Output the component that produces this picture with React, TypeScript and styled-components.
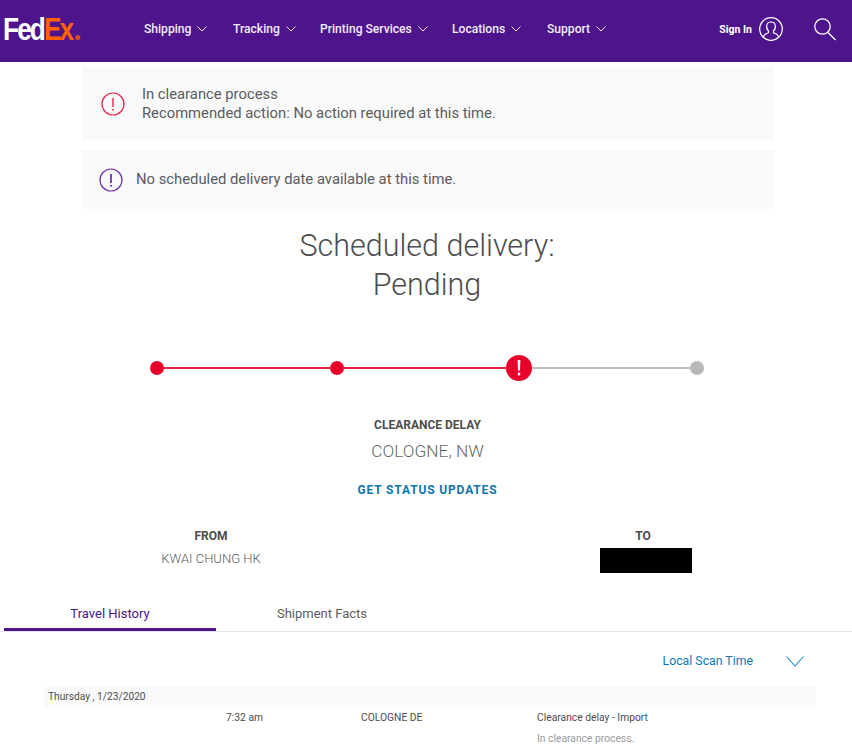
import React from "react";
import styled, { createGlobalStyle } from "styled-components";

const Global = createGlobalStyle`
  html, body { margin: 0; padding: 0; background: #fff; }
  body { font-family: Roboto, "Noto Sans", sans-serif; color: #4d4d4d; overflow: hidden; }
  * { box-sizing: border-box; }
`;

const Page = styled.div`
  width: 852px;
  height: 750px;
  overflow: hidden;
`;

const Header = styled.header`
  height: 62px;
  background: #4d148c;
  display: flex;
  align-items: center;
  color: #fff;
  padding: 0 16px 4px 4px;
`;

const LogoBox = styled.div`
  width: 140px;
  height: 30px;
  display: flex;
  align-items: center;
`;

const Logo = styled.div`
  display: flex;
  align-items: baseline;
  font-family: "Liberation Sans", Arial, sans-serif;
  font-size: 30.5px;
  font-weight: 700;
  letter-spacing: -2.2px;
  line-height: 1;
  transform: scaleX(0.86);
  transform-origin: left center;
  margin-left: -1px;
`;

const LogoEx = styled.span`
  color: #ff6200;
`;

const LogoDot = styled.span`
  width: 6px;
  height: 5px;
  margin-left: 3px;
  border-radius: 50%;
  background: #ff6200;
  opacity: 0.75;
`;

const Nav = styled.nav`
  flex: 1;
  display: flex;
  align-items: center;
`;

const NavItem = styled.a<{ $w: number }>`
  width: ${(p) => p.$w}px;
  display: flex;
  align-items: center;
  gap: 6px;
  font-size: 12.1px;
  font-weight: 500;
  color: #f3edf9;
`;

const SignIn = styled.div`
  display: flex;
  align-items: center;
  gap: 7px;
  font-size: 10.5px;
  font-weight: 700;
  white-space: nowrap;
  margin-right: 31px;
`;

const Main = styled.main`
  width: 692px;
  margin: 5px 0 0 82px;
`;

const Alert = styled.div<{ $h: number; $pad: number; $gap: number }>`
  height: ${(p) => p.$h}px;
  background: #f9f9f9;
  display: flex;
  align-items: center;
  gap: ${(p) => p.$gap}px;
  padding-left: ${(p) => p.$pad}px;
  margin-bottom: 10px;
  font-size: 14.8px;
  line-height: 19px;
  color: #5c5c5c;
`;

const AlertText = styled.div``;

const Title = styled.h1`
  margin: 17px 2px 0 0;
  text-align: center;
  font-size: 30.5px;
  line-height: 39px;
  font-weight: 300;
  color: #4d4d4d;
`;

const Progress = styled.div`
  width: 554px;
  height: 26px;
  margin: 51px 0 0 68px;
  display: flex;
  align-items: center;
`;

const Dot = styled.span<{ $grey?: boolean }>`
  width: 14px;
  height: 14px;
  flex: none;
  border-radius: 50%;
  background: ${(p) => (p.$grey ? "#b8b8b8" : "#e8002d")};
`;

const Line = styled.span<{ $w: number; $grey?: boolean }>`
  width: ${(p) => p.$w}px;
  height: 2px;
  flex: none;
  background: ${(p) => (p.$grey ? "#bdbdbd" : "#e8244a")};
`;

const BigDot = styled.span`
  width: 26px;
  height: 26px;
  flex: none;
  display: flex;
  align-items: center;
  justify-content: center;
  border-radius: 50%;
  background: #e8002d;
`;

const StatusBlock = styled.div`
  text-align: center;
  margin: 0 1px 0 0;
`;

const StatusLabel = styled.div`
  margin-top: 36px;
  font-size: 12px;
  line-height: 16px;
  font-weight: 700;
  color: #4d4d4d;
`;

const StatusPlace = styled.div`
  margin-top: 8px;
  font-size: 17.3px;
  line-height: 20px;
  font-weight: 300;
  color: #666;
`;

const StatusLink = styled.a`
  display: block;
  margin-top: 21px;
  font-size: 12px;
  line-height: 16px;
  font-weight: 700;
  letter-spacing: 0.85px;
  color: #0f75ae;
`;

const Route = styled.div`
  height: 62px;
  margin-top: 30px;
  padding-left: 80px;
  display: flex;
`;

const RouteCol = styled.div<{ $w: number }>`
  width: ${(p) => p.$w}px;
  display: flex;
  flex-direction: column;
  align-items: center;
`;

const RouteLabel = styled.div<{ $shift?: number }>`
  font-size: 12px;
  line-height: 16px;
  font-weight: 700;
  color: #4d4d4d;
  margin-right: ${(p) => p.$shift ?? 0}px;
`;

const RouteValue = styled.div`
  margin-top: 7px;
  font-size: 13px;
  line-height: 16px;
  font-weight: 300;
  color: #5c5c5c;
`;

const Redacted = styled.div`
  width: 92px;
  height: 25px;
  margin-top: 4px;
  background: #000;
`;

const RouteSpacer = styled.div`
  width: 258px;
`;

const Tabs = styled.div`
  margin-top: 9px;
  height: 33px;
  padding-left: 4px;
  display: flex;
  border-bottom: 1px solid #e3e3e3;
`;

const Tab = styled.div<{ $active?: boolean }>`
  width: 212px;
  height: 32px;
  padding-top: 5px;
  text-align: center;
  font-size: 13px;
  line-height: 20px;
  color: ${(p) => (p.$active ? "#4d148c" : "#5c5c5c")};
  border-bottom: 3px solid ${(p) => (p.$active ? "#4d148c" : "transparent")};
`;

const ScanRow = styled.div`
  height: 54px;
  padding: 19px 48px 0 0;
  display: flex;
  justify-content: flex-end;
  gap: 33px;
  font-size: 12.3px;
  line-height: 20px;
  font-weight: 400;
  color: #0f75ae;
`;

const DateRow = styled.div`
  margin-left: 44px;
  width: 772px;
  height: 21px;
  padding-left: 4px;
  background: #fafafa;
  font-size: 10.2px;
  line-height: 22px;
  color: #4d4d4d;
`;

const Scan = styled.div`
  display: grid;
  grid-template-columns: 135px 176px 1fr;
  padding: 4px 0 0 226px;
  font-size: 10.3px;
  line-height: 14px;
  color: #4d4d4d;
`;

const ScanNote = styled.div`
  margin-top: 7px;
  color: #9a9a9a;
`;

const Chevron = ({ size = 10 }: { size?: number }) => (
  <svg width={size} height={size * 0.6} viewBox="0 0 10 6" fill="none" stroke="#fff" strokeWidth="0.9">
    <path d="M0.5 0.5 L5 5 L9.5 0.5" />
  </svg>
);

export default function App() {
  return (
    <Page>
      <Global />
      <Header>
        <LogoBox>
          <Logo>
            Fed<LogoEx>Ex</LogoEx>
            <LogoDot />
          </Logo>
        </LogoBox>
        <Nav>
          <NavItem $w={89}>Shipping <Chevron /></NavItem>
          <NavItem $w={87}>Tracking <Chevron /></NavItem>
          <NavItem $w={132}>Printing Services <Chevron /></NavItem>
          <NavItem $w={95}>Locations <Chevron /></NavItem>
          <NavItem $w={150}>Support <Chevron /></NavItem>
        </Nav>
        <SignIn>
          Sign In
          <svg width="24" height="24" viewBox="0 0 24 24" fill="none" stroke="#fff" strokeWidth="1.2">
            <circle cx="12" cy="12" r="11.3" />
            <path d="M4.5 20 C5 17 7 16.6 9.5 15.8 L9.5 14 C8 12.8 7.5 10.5 7.7 8.8 C8 6.3 10 5 12 5 C14 5 16 6.3 16.3 8.8 C16.5 10.5 16 12.8 14.5 14 L14.5 15.8 C17 16.6 19 17 19.5 20" />
          </svg>
        </SignIn>
        <svg width="22" height="23" viewBox="0 0 22 23" fill="none" stroke="#fff" strokeWidth="1.3">
          <circle cx="8.5" cy="8.5" r="7.7" />
          <path d="M14 14.5 L21.5 22" />
        </svg>
      </Header>
      <Main>
        <Alert $h={73} $pad={19} $gap={17}>
          <svg width="24" height="24" viewBox="0 0 24 24" fill="none" stroke="#e8244a" strokeWidth="1.2">
            <circle cx="12" cy="12" r="11" />
            <path d="M12 6 V15" strokeWidth="1.4" />
            <path d="M12 17 V18.6" strokeWidth="1.6" />
          </svg>
          <AlertText>
            In clearance process
            <br />
            Recommended action: No action required at this time.
          </AlertText>
        </Alert>
        <Alert $h={59} $pad={17} $gap={13}>
          <svg width="24" height="24" viewBox="0 0 24 24" fill="none" stroke="#6a35a0" strokeWidth="1.2">
            <circle cx="12" cy="12" r="11" />
            <path d="M12 6 V15" stroke="#4d148c" strokeWidth="1.5" />
            <path d="M12 17 V18.6" stroke="#4d148c" strokeWidth="1.7" />
          </svg>
          <AlertText>No scheduled delivery date available at this time.</AlertText>
        </Alert>
        <Title>
          Scheduled delivery:
          <br />
          Pending
        </Title>
        <Progress>
          <Dot />
          <Line $w={166} />
          <Dot />
          <Line $w={162} />
          <BigDot>
            <svg width="4" height="16" viewBox="0 0 4 16" fill="#fff">
              <path d="M0.6 0 H3.4 L3 10.5 H1 Z" />
              <rect x="0.8" y="12.6" width="2.4" height="2.8" />
            </svg>
          </BigDot>
          <Line $w={158} $grey />
          <Dot $grey />
        </Progress>
        <StatusBlock>
          <StatusLabel>CLEARANCE DELAY</StatusLabel>
          <StatusPlace>COLOGNE, NW</StatusPlace>
          <StatusLink>GET STATUS UPDATES</StatusLink>
        </StatusBlock>
      </Main>
      <Route>
        <RouteCol $w={262}>
          <RouteLabel>FROM</RouteLabel>
          <RouteValue>KWAI CHUNG HK</RouteValue>
        </RouteCol>
        <RouteSpacer />
        <RouteCol $w={92}>
          <RouteLabel $shift={6}>TO</RouteLabel>
          <Redacted />
        </RouteCol>
      </Route>
      <Tabs>
        <Tab $active>Travel History</Tab>
        <Tab>Shipment Facts</Tab>
      </Tabs>
      <ScanRow>
        Local Scan Time
        <svg width="18" height="11" viewBox="0 0 18 11" fill="none" stroke="#1a8ac4" strokeWidth="1.1" style={{ marginTop: 5 }}>
          <path d="M0.5 0.5 L9 10 L17.5 0.5" />
        </svg>
      </ScanRow>
      <DateRow>Thursday , 1/23/2020</DateRow>
      <Scan>
        <div>7:32 am</div>
        <div>COLOGNE DE</div>
        <div>
          Clearance delay - Import
          <ScanNote>In clearance process.</ScanNote>
        </div>
      </Scan>
    </Page>
  );
}
